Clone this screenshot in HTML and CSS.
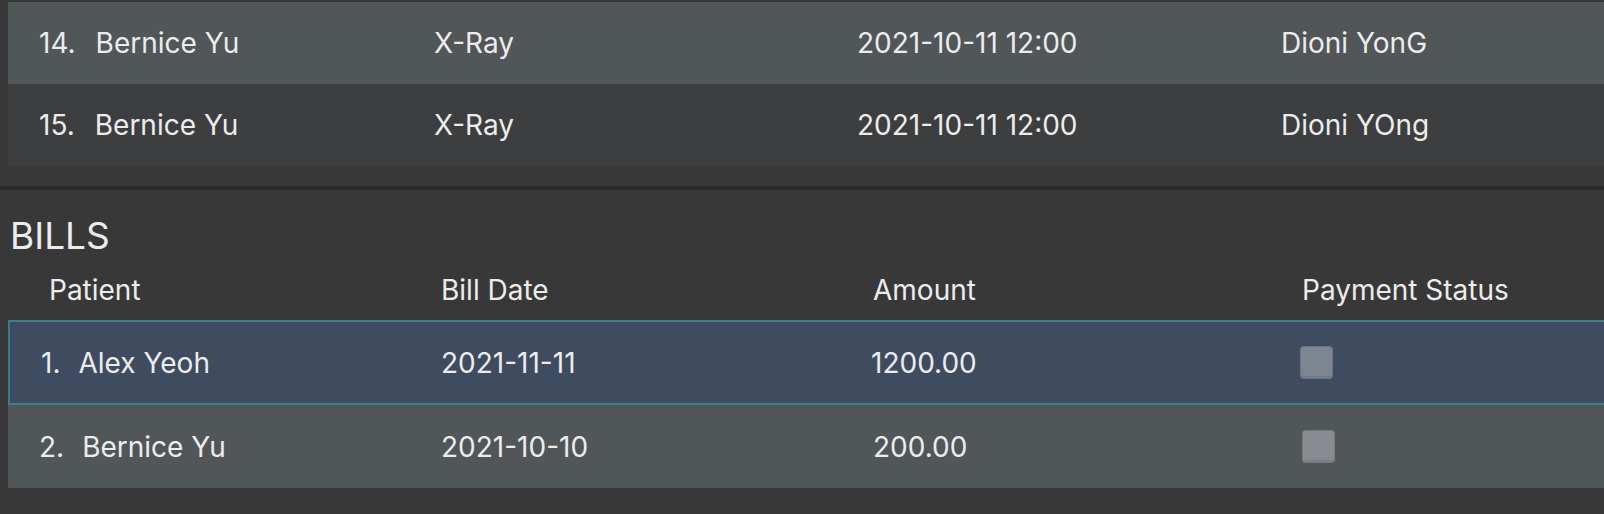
FILE: index.html
```html
<!DOCTYPE html>
<html>
<head>
<meta charset="utf-8">
<link rel="stylesheet" href="styles.css">
</head>
<body>
<section class="appt-list">
  <div class="row appt even">
    <div class="cell name"><span class="idx">14.</span>Bernice Yu</div>
    <div class="cell">X-Ray</div>
    <div class="cell">2021-10-11 12:00</div>
    <div class="cell">Dioni YonG</div>
  </div>
  <div class="row appt odd">
    <div class="cell name"><span class="idx">15.</span>Bernice Yu</div>
    <div class="cell">X-Ray</div>
    <div class="cell">2021-10-11 12:00</div>
    <div class="cell">Dioni YOng</div>
  </div>
</section>
<div class="divider"></div>
<section class="bills">
  <h2 class="title">BILLS</h2>
  <div class="bill-header">
    <div class="cell">Patient</div>
    <div class="cell">Bill Date</div>
    <div class="cell">Amount</div>
    <div class="cell">Payment Status</div>
  </div>
  <div class="bill-list">
    <div class="row bill selected">
      <div class="cell name"><span class="idx">1.</span>Alex Yeoh</div>
      <div class="cell">2021-11-11</div>
      <div class="cell amt">1200.00</div>
      <div class="cell"><span class="check"></span></div>
    </div>
    <div class="row bill even">
      <div class="cell name"><span class="idx">2.</span>Bernice Yu</div>
      <div class="cell">2021-10-10</div>
      <div class="cell">200.00</div>
      <div class="cell"><span class="check alt"></span></div>
    </div>
  </div>
</section>
</body>
</html>
```
FILE: styles.css
```css
html, body {
  margin: 0;
  padding: 0;
}
body {
  width: 1604px;
  height: 514px;
  overflow: hidden;
  background: #383838;
  color: #ececec;
  font-family: Inter, "Noto Sans", sans-serif;
  font-size: 28px;
}
.appt-list {
  padding: 2px 0 20px 8px;
}
.row {
  display: grid;
  align-items: center;
  box-sizing: border-box;
}
.appt {
  height: 82px;
  padding-left: 31px;
  grid-template-columns: 395px 423px 424px 1fr;
}
.appt .idx {
  margin-right: 20px;
}
.even { background: #515658; }
.odd { background: #3c3e3f; }
.cell {
  white-space: nowrap;
}
.idx {
  margin-right: 18px;
}
.divider {
  height: 4px;
  background: #2b2b2b;
}
.bills {
  padding-bottom: 26px;
}
.title {
  margin: 0;
  padding: 22px 0 0 10px;
  height: 47px;
  font-size: 37px;
  font-weight: 400;
  line-height: 47px;
}
.bill-header {
  display: grid;
  grid-template-columns: 392px 432px 429px 1fr;
  padding-left: 49px;
  height: 61px;
  align-items: center;
}
.bill-list {
  padding-left: 8px;
}
.bill {
  height: 83px;
  padding-left: 31px;
  grid-template-columns: 402px 432px 429px 1fr;
}
.bill.selected {
  height: 85px;
  background: #3f4b5e;
  border: 2px solid #3a7d8f;
  border-right: none;
  padding-left: 31px;
  grid-template-columns: 400px 432px 429px 1fr;
}
.bill .amt {
  margin-left: -2px;
}
.check {
  display: block;
  width: 33px;
  height: 33px;
  box-sizing: border-box;
  margin-left: -2px;
  border-radius: 4px;
  background: rgba(190, 192, 198, 0.5);
  border: 1px solid rgba(0, 0, 0, 0.12);
  box-shadow: inset 0 -2px 0 rgba(0, 0, 0, 0.08);
}
.check.alt {
  margin-left: 0;
}
```
